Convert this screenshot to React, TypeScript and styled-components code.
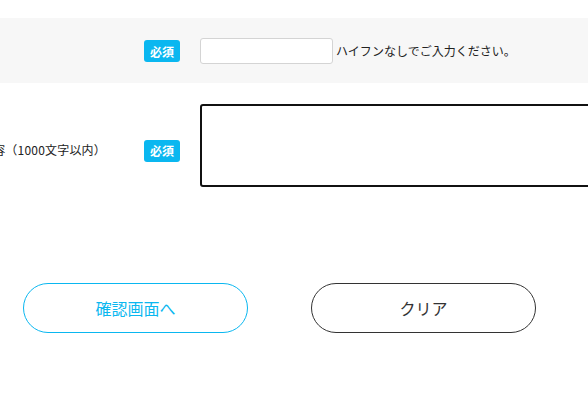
import styled, { createGlobalStyle } from "styled-components";

const GlobalStyle = createGlobalStyle`
  html, body {
    margin: 0;
    padding: 0;
    background: #fff;
    overflow: hidden;
  }
  body {
    font-family: "Noto Sans CJK JP", "Noto Sans", sans-serif;
    color: #222;
  }
`;

const Colors = {
  accent: "#0ab7f0",
  rowBg: "#f7f7f7",
  text: "#222",
};

export default function App() {
  return (
    <>
      <GlobalStyle />
      <Page>
        <FormRow shaded>
          <Label />
          <BadgeCell>
            <Badge>必須</Badge>
          </BadgeCell>
          <Field>
            <TextInput type="text" />
            <Note>ハイフンなしでご入力ください。</Note>
          </Field>
        </FormRow>
        <FormRow padded>
          <Label>お問い合わせ内容（1000文字以内）</Label>
          <BadgeCell>
            <Badge>必須</Badge>
          </BadgeCell>
          <Field>
            <TextArea />
          </Field>
        </FormRow>
        <Buttons>
          <RoundButton primary>確認画面へ</RoundButton>
          <RoundButton>クリア</RoundButton>
        </Buttons>
      </Page>
    </>
  );
}

const Page = styled.div`
  padding-top: 18px;
  width: 588px;
`;

const FormRow = styled.div<{ shaded?: boolean; padded?: boolean }>`
  display: grid;
  grid-template-columns: 106px 94px 1fr;
  align-items: center;
  height: ${({ padded }) => (padded ? "auto" : "65px")};
  padding: ${({ padded }) => (padded ? "21px 0" : "0")};
  background: ${({ shaded }) => (shaded ? Colors.rowBg : "transparent")};
`;

const Label = styled.div`
  display: flex;
  justify-content: flex-end;
  overflow: hidden;
  white-space: nowrap;
  font-size: 12px;
  letter-spacing: 0.2px;
  color: ${Colors.text};
  padding-bottom: 1px;
`;

const BadgeCell = styled.div`
  padding-left: 38px;
  display: flex;
  align-items: center;
`;

const Badge = styled.span`
  width: 36px;
  height: 22px;
  border-radius: 3px;
  background: ${Colors.accent};
  color: #fff;
  font-size: 12px;
  font-weight: bold;
  display: flex;
  align-items: center;
  justify-content: center;
  margin-top: 1px;
`;

const Field = styled.div`
  display: flex;
  align-items: center;
  min-width: 0;
`;

const TextInput = styled.input`
  box-sizing: border-box;
  width: 133px;
  height: 26px;
  border: 1px solid #d4d4d4;
  border-radius: 3px;
  background: #fff;
  margin: 0;
  padding: 0 6px;
`;

const Note = styled.span`
  margin-left: 3px;
  font-size: 12px;
  color: ${Colors.text};
  white-space: nowrap;
`;

const TextArea = styled.textarea`
  box-sizing: border-box;
  width: 460px;
  height: 83px;
  border: 2px solid #111;
  border-radius: 3px;
  margin: 0 0 9px;
  padding: 6px;
  resize: none;
  flex-shrink: 0;
`;

const Buttons = styled.div`
  display: flex;
  gap: 63px;
  padding-left: 23px;
  margin-top: 66px;
`;

const RoundButton = styled.button<{ primary?: boolean }>`
  box-sizing: border-box;
  width: 225px;
  height: 50px;
  border-radius: 25px;
  background: #fff;
  border: 1px solid ${({ primary }) => (primary ? Colors.accent : "#333")};
  color: ${({ primary }) => (primary ? Colors.accent : "#333")};
  font-family: "Noto Sans CJK JP", "Noto Sans", sans-serif;
  font-size: 16px;
  cursor: pointer;
  padding: 0;
`;
